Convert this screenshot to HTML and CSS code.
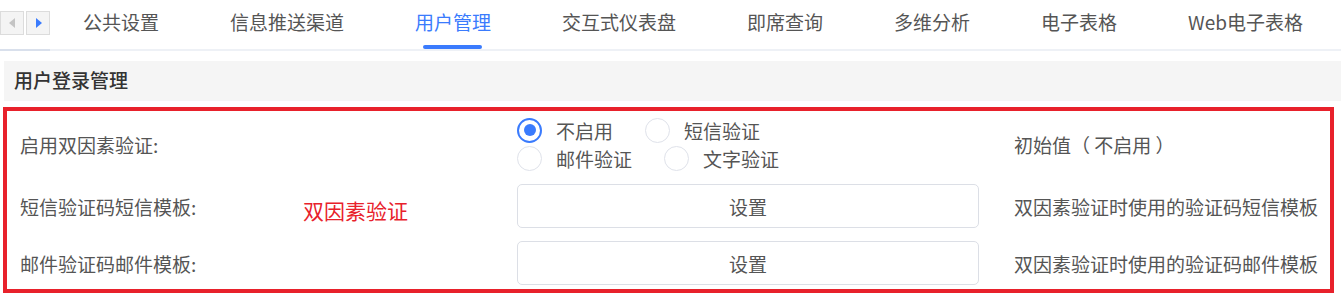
FILE: index.html
```
<!DOCTYPE html>
<html lang="zh-CN">
<head>
  <meta charset="UTF-8">
  <title>用户管理</title>
  <link rel="stylesheet" href="styles.css">
</head>
<body>

  <div class="tabbar">
    <div class="scroller">
      <span class="arrow arrow-left"></span>
      <span class="arrow arrow-right"></span>
    </div>
    <div class="tabs">
      <span class="tab">公共设置</span>
      <span class="tab">信息推送渠道</span>
      <span class="tab active">用户管理</span>
      <span class="tab">交互式仪表盘</span>
      <span class="tab">即席查询</span>
      <span class="tab">多维分析</span>
      <span class="tab">电子表格</span>
      <span class="tab">Web电子表格</span>
    </div>
  </div>

  <div class="section-title">用户登录管理</div>

  <div class="panel">
    <div class="row row-radio">
      <div class="label">启用双因素验证:</div>
      <div class="radio-group">
        <label class="option checked"><span class="dot"></span>不启用</label>
        <label class="option"><span class="dot"></span>短信验证</label>
        <label class="option"><span class="dot"></span>邮件验证</label>
        <label class="option"><span class="dot"></span>文字验证</label>
      </div>
      <div class="desc">初始值（ 不启用 ）</div>
    </div>

    <div class="row">
      <div class="label">短信验证码短信模板:</div>
      <button class="btn">设置</button>
      <div class="desc">双因素验证时使用的验证码短信模板</div>
      <span class="mark">双因素验证</span>
    </div>

    <div class="row">
      <div class="label">邮件验证码邮件模板:</div>
      <button class="btn">设置</button>
      <div class="desc">双因素验证时使用的验证码邮件模板</div>
    </div>
  </div>

</body>
</html>
```

FILE: styles.css
```
body {
  margin: 0;
  font-family: "Noto Sans CJK SC", "Noto Sans", sans-serif;
  font-size: 19px;
  color: #555;
  background: #fff;
}

.tabbar {
  display: flex;
  height: 49px;
  border-bottom: 2px solid #eef1f6;
}

.scroller {
  display: flex;
  align-items: flex-start;
  gap: 2px;
  width: 50px;
  padding-top: 11px;
  box-sizing: border-box;
  border-bottom: 2px solid #d9e0ec;
  height: 51px;
}

.arrow {
  position: relative;
  width: 22px;
  height: 22px;
  border: 1px solid #dcdcdc;
  background: #f4f4f4;
}

.arrow::before {
  content: '';
  position: absolute;
  top: 6px;
  left: 8px;
  border-top: 5px solid transparent;
  border-bottom: 5px solid transparent;
}

.arrow-left::before {
  border-right: 6px solid #c4c4c4;
}

.arrow-right::before {
  left: 9px;
  border-left: 6px solid #3a7bfd;
}

.tabs {
  display: flex;
  gap: 71px;
  margin-left: 33px;
}

.tab {
  position: relative;
  padding-top: 12px;
  line-height: 20px;
  white-space: nowrap;
}

.tab.active {
  color: #3a7bfd;
}

.tab.active::after {
  content: '';
  position: absolute;
  left: 8px;
  right: 9px;
  bottom: 0;
  height: 4px;
  border-radius: 3px;
  background: #3a7bfd;
}

.section-title {
  margin: 10px 0 0 4px;
  height: 40px;
  line-height: 38px;
  padding-left: 10px;
  background: #f5f5f5;
  color: #333;
  font-weight: 500;
}

.panel {
  display: flex;
  flex-direction: column;
  gap: 13px;
  width: 1331px;
  box-sizing: border-box;
  margin: 6px 0 0 3px;
  padding: 6px 0 4px 13px;
  border: 4px solid #e8212b;
}

.row {
  position: relative;
  display: grid;
  grid-template-columns: 497px 462px 1fr;
  align-items: center;
  height: 44px;
}

.row-radio {
  height: 54px;
}

.desc {
  padding-left: 35px;
  white-space: nowrap;
}

.radio-group {
  display: flex;
  flex-wrap: wrap;
  row-gap: 3px;
  width: 310px;
}

.option {
  display: flex;
  align-items: center;
  height: 25px;
  margin-right: 32px;
  white-space: nowrap;
}

.dot {
  position: relative;
  width: 25px;
  height: 25px;
  box-sizing: border-box;
  margin-right: 14px;
  border: 1.5px solid #dfe2ea;
  border-radius: 50%;
  background: #fff;
}

.option.checked .dot {
  border: 2px solid #3a7bfd;
}

.option.checked .dot::after {
  content: '';
  position: absolute;
  top: 4.5px;
  left: 4.5px;
  width: 12px;
  height: 12px;
  border-radius: 50%;
  background: #3a7bfd;
}

.btn {
  height: 44px;
  border: 1px solid #dcdfe6;
  border-radius: 5px;
  background: #fff;
  font: inherit;
  color: #555;
  cursor: pointer;
}

.mark {
  position: absolute;
  left: 283px;
  top: 14px;
  font-size: 21px;
  line-height: 24px;
  color: #e8212b;
}
```
